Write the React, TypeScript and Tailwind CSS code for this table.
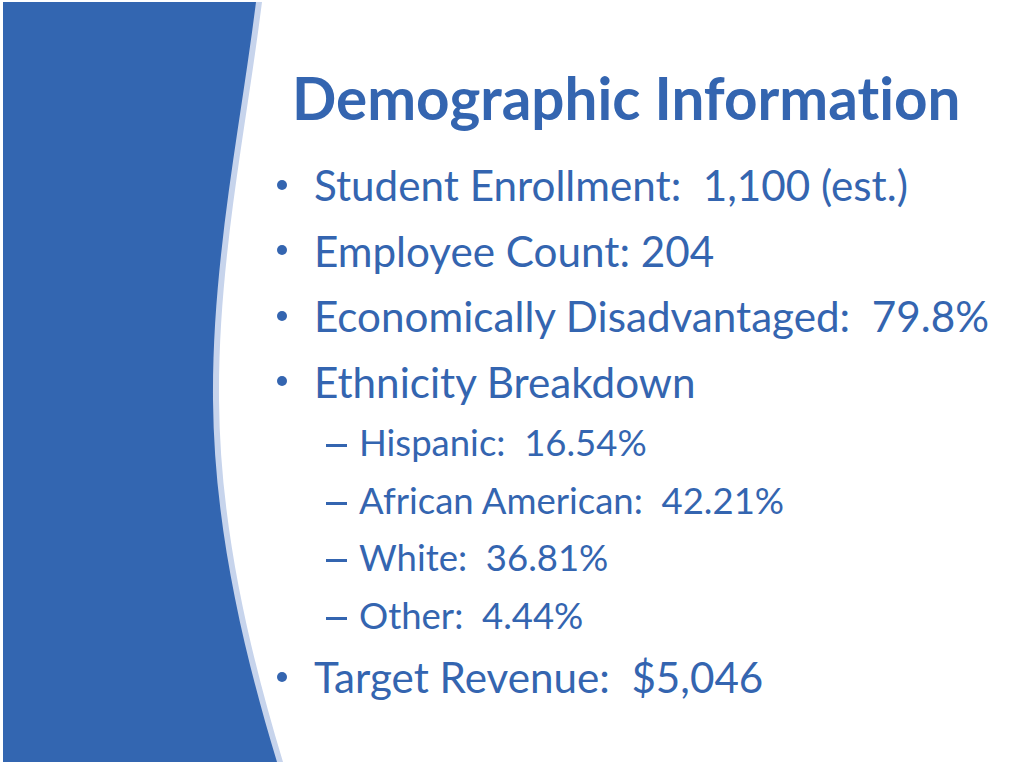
const items = [
  { level: 1, text: "Student Enrollment:  1,100 (est.)" },
  { level: 1, text: "Employee Count: 204" },
  { level: 1, text: "Economically Disadvantaged:  79.8%" },
  { level: 1, text: "Ethnicity Breakdown" },
  { level: 2, text: "Hispanic:  16.54%" },
  { level: 2, text: "African American:  42.21%" },
  { level: 2, text: "White:  36.81%" },
  { level: 2, text: "Other:  4.44%" },
  { level: 1, text: "Target Revenue:  $5,046" },
];

const SidePanel = () => (
  <svg
    className="absolute inset-0 w-full h-full"
    viewBox="0 0 1024 768"
    preserveAspectRatio="none"
  >
    {/* light edge behind the blue shape */}
    <path
      d="M3 2 L256 2 C240 130 212 260 213 400 C214 520 240 640 277 762 L3 762 Z"
      fill="#c7d4ec"
      transform="translate(6 0)"
    />
    <path
      d="M3 2 L256 2 C240 130 212 260 213 400 C214 520 240 640 277 762 L3 762 Z"
      fill="#3366b1"
    />
  </svg>
);

export default function App() {
  return (
    <div className="relative w-[1024px] h-[768px] overflow-hidden bg-white">
      <SidePanel />
      <div
        className="relative pl-[277px] pt-[62px] text-[#3465b0] [font-variant-ligatures:none]"
        style={{ fontFamily: "Lato, 'Open Sans', sans-serif" }}
      >
        {/* Title */}
        <h1 className="ml-[15px] h-[70px] leading-[70px] text-[58.4px] font-bold whitespace-nowrap">
          Demographic Information
        </h1>
        {/* Bullets */}
        <ul className="mt-[20px]">
          {items.map((item, i) =>
            item.level === 1 ? (
              <li key={i} className="flex items-center h-[65.5px]">
                <span className="shrink-0 w-[10px] h-[10px] rounded-full bg-[#3465b0]" />
                <span className="ml-[27px] text-[42.2px] leading-[65.5px] whitespace-pre">
                  {item.text}
                </span>
              </li>
            ) : (
              <li key={i} className="flex items-center h-[57.5px]">
                <span className="shrink-0 ml-[49px] mt-[6px] w-[21px] h-[3px] bg-[#3465b0]" />
                <span className="ml-[12px] text-[36.5px] leading-[57.5px] whitespace-pre">
                  {item.text}
                </span>
              </li>
            )
          )}
        </ul>
      </div>
    </div>
  );
}
